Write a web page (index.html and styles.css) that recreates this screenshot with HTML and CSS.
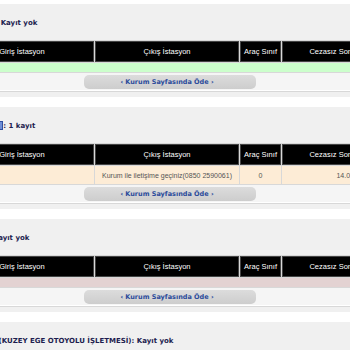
FILE: index.html
```html
<!DOCTYPE html>
<html lang="tr">
<head>
    <meta charset="UTF-8">
    <title>Otoyol İhlalli Geçiş Sorgulama</title>
    <link rel="stylesheet" href="styles.css">
</head>
<body>
    <div class="page">
        <section class="panel">
            <h3 class="title">KGM Otoyol: Kayıt yok</h3>
            <table class="grid">
                <tr>
                    <th class="c-wide">Giriş İstasyon</th>
                    <th class="c-wide">Çıkış İstasyon</th>
                    <th class="c-narrow">Araç Sınıf</th>
                    <th class="c-wide">Cezasız Son Ödeme Tarihi</th>
                    <th class="c-wide">Cezalı Son Ödeme Tarihi</th>
                    <th class="c-amount">Tutar</th>
                </tr>
                <tr class="row-empty row-ok"><td colspan="6"></td></tr>
                <tr class="row-pay">
                    <td colspan="6"><button class="pay-btn">‹ Kurum Sayfasında Öde ›</button></td>
                </tr>
            </table>
        </section>

        <section class="panel">
            <h3 class="title">Osmangazi<span class="link-ico"></span>: 1 kayıt</h3>
            <table class="grid">
                <tr>
                    <th class="c-wide">Giriş İstasyon</th>
                    <th class="c-wide">Çıkış İstasyon</th>
                    <th class="c-narrow">Araç Sınıf</th>
                    <th class="c-wide">Cezasız Son Ödeme Tarihi</th>
                    <th class="c-wide">Cezalı Son Ödeme Tarihi</th>
                    <th class="c-amount">Tutar</th>
                </tr>
                <tr class="row-data">
                    <td></td>
                    <td>Kurum ile iletişime geçiniz(0850 2590061)</td>
                    <td>0</td>
                    <td>14.06.2024</td>
                    <td>29.06.2024</td>
                    <td>0,00</td>
                </tr>
                <tr class="row-pay">
                    <td colspan="6"><button class="pay-btn">‹ Kurum Sayfasında Öde ›</button></td>
                </tr>
            </table>
        </section>

        <section class="panel">
            <h3 class="title">Menemen: Kayıt yok</h3>
            <table class="grid">
                <tr>
                    <th class="c-wide">Giriş İstasyon</th>
                    <th class="c-wide">Çıkış İstasyon</th>
                    <th class="c-narrow">Araç Sınıf</th>
                    <th class="c-wide">Cezasız Son Ödeme Tarihi</th>
                    <th class="c-wide">Cezalı Son Ödeme Tarihi</th>
                    <th class="c-amount">Tutar</th>
                </tr>
                <tr class="row-empty row-warn"><td colspan="6"></td></tr>
                <tr class="row-pay">
                    <td colspan="6"><button class="pay-btn">‹ Kurum Sayfasında Öde ›</button></td>
                </tr>
            </table>
        </section>

        <section class="panel">
            <h3 class="title">Gebze-İzmir (KUZEY EGE OTOYOLU İŞLETMESİ): Kayıt yok</h3>
        </section>
    </div>
</body>
</html>
```

FILE: styles.css
```css
:root { --panel: #f0f0f0; --ink: #1d1d4f; --link: #2b4b9b; --ok: #ccffcc; --data: #fdecd6; --warn: #e3d2d2; }
body { margin: 0; background: #fff; font-family: "Liberation Sans", Arial, sans-serif; }
.page { margin-left: -51px; width: 720px; padding-top: 4px; }
.panel { background: var(--panel); padding: 12px 0 5px; margin-bottom: 10px; }
.title { margin: 0 0 10px; font: bold 7px/14px "DejaVu Sans", Verdana, sans-serif; color: var(--ink); white-space: nowrap; }
.link-ico { display: inline-block; width: 7px; height: 9px; vertical-align: -2px; margin-left: 4px; background: #6f8fd8; border: 1px solid #2f4f9f; box-sizing: border-box; }
.grid { border-collapse: separate; border-spacing: 1px; background: #d8d8d8; table-layout: fixed; width: 660px; }
.grid th { background: #000; color: #fff; font-weight: normal; font-size: 7.5px; height: 21px; padding: 0; text-align: center; border: 1px solid #444; box-sizing: border-box; }
.c-wide { width: 144px; }
.c-narrow { width: 41px; }
.c-amount { width: 80px; }
.grid td { padding: 0; }
.row-empty td { height: 9px; }
.row-ok td { background: var(--ok); }
.row-warn td { background: var(--warn); }
.row-data td { background: var(--data); height: 18px; font-size: 7px; color: #555; text-align: center; }
.row-pay td { background: #f5f5f5; height: 17px; padding-left: 134px; border-bottom: 1px solid #fff; }
.pay-btn { display: block; width: 172px; height: 14px; padding: 0 6px 0 0; border: none; border-radius: 5px; background: linear-gradient(#dcdcdc, #cdcdcd); color: var(--link); font: bold 6.5px/14px "DejaVu Sans", Verdana, sans-serif; cursor: pointer; }
```
